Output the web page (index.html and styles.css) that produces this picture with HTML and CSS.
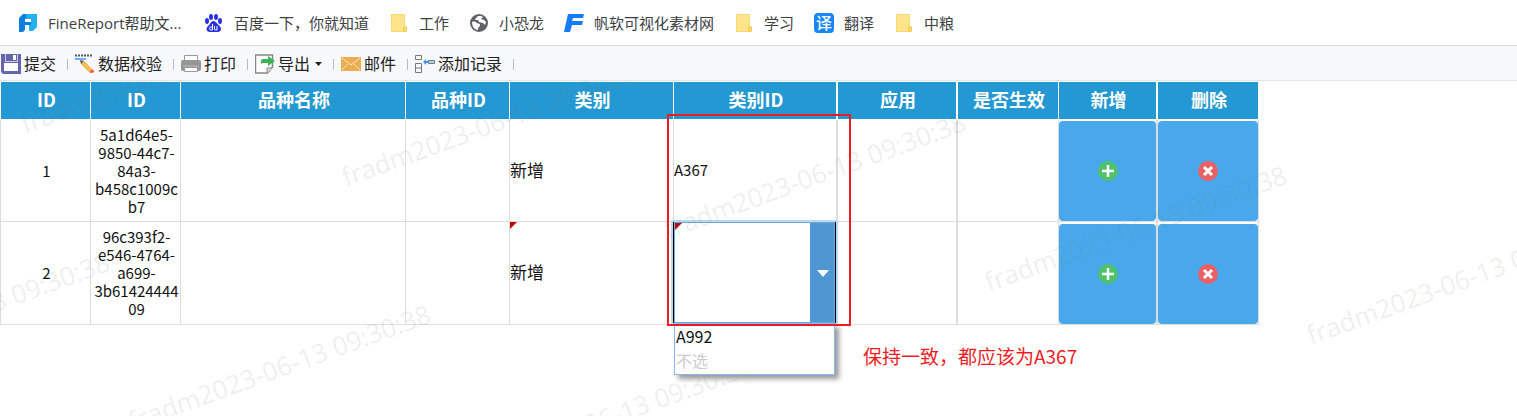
FILE: index.html
```
<!DOCTYPE html>
<html lang="zh-CN">
<head>
<meta charset="UTF-8">
<meta name="viewport" content="width=device-width, initial-scale=1.0">
<title>填报</title>
<link rel="stylesheet" href="styles.css">
</head>
<body>

<!-- 书签栏 -->
<nav class="bookmarks">
    <a href="#" class="first">
        <svg class="icon" viewBox="0 0 20 20"><path d="M5 1h14v13l-4 4h-4V9H5z" fill="#22b2ef"/><path d="M1 5l4-4h3v5h4v5H7v6l-2 2H1z" fill="#0a7fdb"/><path d="M7 6h6v3H7zM7 12h4v6H7z" fill="#fff"/><path d="M7 9h6v3H7z" fill="#0a7fdb"/></svg>
        <span>FineReport帮助文...</span>
    </a>
    <a href="#">
        <svg class="icon" viewBox="0 0 20 20" fill="#2932e1"><ellipse cx="7" cy="4" rx="2" ry="3"/><ellipse cx="12" cy="4" rx="2" ry="3"/><ellipse cx="3" cy="8" rx="2" ry="3"/><ellipse cx="16" cy="8" rx="2" ry="3"/><path d="M9.500 8c2 0 3 2 4.500 3.500s3 2.500 3 4.500-1.500 3-3.500 3H6c-2 0-3.500-1-3.500-3s2-3 3-4.500S7.500 8 9.500 8z"/><g fill="none" stroke="#fff"><path d="M8.500 11v6H7q-1.500 0-1.500-1.500T7 14h1.500M10.500 13v3q0 1 1 1H13v-4"/></g></svg>
        <span>百度一下，你就知道</span>
    </a>
    <a href="#">
        <svg class="icon" viewBox="0 0 20 20"><path d="M2 2q0-1 1-1h12q1 0 1 1v11q2 0 2 2v3q0 1-1 1H3q-1 0-1-1z" fill="#ffe48c"/><path d="M2.500 1.500h13v12q-1 .5-1 2v3h-12z" fill="none" stroke="#fbd971"/><path d="M14.500 17v-2q0-1.500 1.500-1.500t1.500 1.500v2q0 1.500-1.500 1.500t-1.500-1.500z" fill="#ffdf75" stroke="#f2c94c"/></svg>
        <span>工作</span>
    </a>
    <a href="#">
        <svg class="icon" viewBox="0 0 20 20"><circle cx="10" cy="10" r="9" fill="#5f6368"/><path d="M3 9c2-1 4 0 5 1s3 0 3 2-2 2-2 4v1c-4 0-6-4-6-8z" fill="#fff"/><path d="M9 3h3l2 1-2 2 3 1 2 2-1 3-2-2-4-1-1-2-3 0 1-2z" fill="#fff"/></svg>
        <span>小恐龙</span>
    </a>
    <a href="#">
        <svg class="icon" viewBox="0 0 20 20"><path d="M4 1h16l-1 4H9l-1 3h11l-1 4H8l-2 7H0z" fill="#167cff"/></svg>
        <span>帆软可视化素材网</span>
    </a>
    <a href="#">
        <svg class="icon" viewBox="0 0 20 20"><path d="M2 2q0-1 1-1h12q1 0 1 1v11q2 0 2 2v3q0 1-1 1H3q-1 0-1-1z" fill="#ffe48c"/><path d="M2.500 1.500h13v12q-1 .5-1 2v3h-12z" fill="none" stroke="#fbd971"/><path d="M14.500 17v-2q0-1.500 1.500-1.500t1.500 1.500v2q0 1.500-1.500 1.500t-1.500-1.500z" fill="#ffdf75" stroke="#f2c94c"/></svg>
        <span>学习</span>
    </a>
    <a href="#">
        <span class="icon fanyi">译</span>
        <span>翻译</span>
    </a>
    <a href="#">
        <svg class="icon" viewBox="0 0 20 20"><path d="M2 2q0-1 1-1h12q1 0 1 1v11q2 0 2 2v3q0 1-1 1H3q-1 0-1-1z" fill="#ffe48c"/><path d="M2.500 1.500h13v12q-1 .5-1 2v3h-12z" fill="none" stroke="#fbd971"/><path d="M14.500 17v-2q0-1.500 1.500-1.500t1.500 1.500v2q0 1.500-1.500 1.500t-1.500-1.500z" fill="#ffdf75" stroke="#f2c94c"/></svg>
        <span>中粮</span>
    </a>
</nav>

<!-- 工具栏 -->
<div class="toolbar">
    <button type="button">
        <svg class="icon" viewBox="0 0 20 20"><path d="M0 0h20v20H2l-2-2z" fill="#6467ad"/><path d="M4 0h1v7h11V0h1v8H4z" fill="#c9cae6"/><path d="M12 1h3v5h-3z" fill="#fff"/><path d="M3 9h14v8H3z" fill="#fff"/></svg>
        <span>提交</span>
    </button>
    <button type="button">
        <svg class="icon" viewBox="0 0 20 20"><path d="M0 1.500h18" stroke="#555" stroke-width="2" stroke-dasharray="2 1"/><path d="M0 5h11" stroke="#3d94f6" stroke-width="1.500"/><path d="M5 6l4 1 8 8-3 3-8-8z" fill="#f5b041"/><path d="M5 6l4 1-3 3z" fill="#666"/><path d="M14 18l3-3 1 1q2 1 1 2t-3 1z" fill="#f0604d"/><path d="M8 9l7 7" stroke="#ffd98c"/></svg>
        <span>数据校验</span>
    </button>
    <button type="button">
        <svg class="icon" viewBox="0 0 20 20"><path d="M3.500 1.500h13v6h-13z" fill="#fff" stroke="#999"/><rect y="6" width="20" height="11" rx="2" fill="#969696"/><path d="M2 12h16" stroke="#bbb"/><path d="M3.500 13.500h13v4h-13z" fill="#fff" stroke="#999"/></svg>
        <span>打印</span>
    </button>
    <button type="button">
        <svg class="icon" viewBox="0 0 20 20"><path d="M.5 1h17v12l-5 6H.5z" fill="#fff" stroke="#888" stroke-width="1.500"/><path d="M12 19v-5h5" fill="#ddd" stroke="#888"/><path d="M6 10V7q0-2 2-2h5V2l7 5-7 5V9H8q-1 0-2 1z" fill="#3fb457"/></svg>
        <span>导出</span>
        <svg class="caret" viewBox="0 0 7 4"><path d="M0 0h7L3.500 4z" fill="#222"/></svg>
    </button>
    <button type="button">
        <svg class="icon" viewBox="0 0 20 20"><path d="M0 3h20v14H0z" fill="#ebac52"/><path d="M1 4l9 7 9-7M1 16l6-6M19 16l-6-6" fill="none" stroke="#fbe6c4"/></svg>
        <span>邮件</span>
    </button>
    <button type="button">
        <svg class="icon" viewBox="0 0 20 20" fill="none" stroke="#777"><path d="M.5 1.500h6v4h-6zM.5 9.500h6v9h-6zM.5 14h6"/><path d="M13.500 6.500h6v3h-6z" fill="#a9d4ff"/><path d="M8 8l3-3v2h2v2h-2v2z" fill="#3d94f6" stroke="none"/></svg>
        <span>添加记录</span>
    </button>
</div>

<!-- 报表 -->
<main class="report">
    <table>
        <colgroup>
            <col class="w-no"><col class="w-id"><col class="w-name"><col class="w-nameid"><col class="w-type">
            <col class="w-type"><col class="w-app"><col class="w-flag"><col class="w-add"><col class="w-del">
        </colgroup>
        <thead>
            <tr>
                <th>ID</th><th>ID</th><th>品种名称</th><th>品种ID</th><th>类别</th>
                <th class="thick">类别ID</th><th class="thick">应用</th><th>是否生效</th><th class="thick">新增</th><th>删除</th>
            </tr>
        </thead>
        <tbody>
            <tr>
                <td>1</td>
                <td>5a1d64e5-<br>9850-44c7-<br>84a3-<br>b458c1009c<br>b7</td>
                <td></td>
                <td></td>
                <td class="left">新增</td>
                <td class="left thick code">A367</td>
                <td class="thick"></td>
                <td></td>
                <td class="action thick"><button type="button" aria-label="新增"><svg viewBox="0 0 20 20"><circle cx="10" cy="10" r="10" fill="#50c26c"/><path d="M10 4v12M4 10h12" stroke="#fff" stroke-width="2.500"/></svg></button></td>
                <td class="action"><button type="button" aria-label="删除"><svg viewBox="0 0 20 20"><circle cx="10" cy="10" r="10" fill="#e96065"/><path d="M6 6l8 8M14 6l-8 8" stroke="#fff" stroke-width="3"/></svg></button></td>
            </tr>
            <tr>
                <td>2</td>
                <td>96c393f2-<br>e546-4764-<br>a699-<br>3b61424444<br>09</td>
                <td></td>
                <td></td>
                <td class="left edited">新增</td>
                <td class="left thick editing">
                    <div class="combo">
                        <select aria-label="类别ID">
                            <option selected></option>
                            <option>A992</option>
                        </select>
                        <svg class="arrow" viewBox="0 0 12 7"><path d="M0 0h12L6 7z" fill="#fff"/></svg>
                    </div>
                    <ul class="menu">
                        <li>A992</li>
                        <li class="none">不选</li>
                    </ul>
                </td>
                <td class="thick"></td>
                <td></td>
                <td class="action thick"><button type="button" aria-label="新增"><svg viewBox="0 0 20 20"><circle cx="10" cy="10" r="10" fill="#50c26c"/><path d="M10 4v12M4 10h12" stroke="#fff" stroke-width="2.500"/></svg></button></td>
                <td class="action"><button type="button" aria-label="删除"><svg viewBox="0 0 20 20"><circle cx="10" cy="10" r="10" fill="#e96065"/><path d="M6 6l8 8M14 6l-8 8" stroke="#fff" stroke-width="3"/></svg></button></td>
            </tr>
        </tbody>
    </table>

    <!-- 水印 -->
    <svg class="watermark" aria-hidden="true">
        <text transform="translate(25 53) rotate(-20)">fradm2023-06-13 09:30:38</text>
        <text transform="translate(346 106) rotate(-20)">fradm2023-06-13 09:30:38</text>
        <text transform="translate(668 158) rotate(-20)">fradm2023-06-13 09:30:38</text>
        <text transform="translate(989 211) rotate(-20)">fradm2023-06-13 09:30:38</text>
        <text transform="translate(1311 264) rotate(-20)">fradm2023-06-13 09:30:38</text>
        <text transform="translate(-188 298) rotate(-20)">fradm2023-06-13 09:30:38</text>
        <text transform="translate(133 350) rotate(-20)">fradm2023-06-13 09:30:38</text>
        <text transform="translate(455 402) rotate(-20)">fradm2023-06-13 09:30:38</text>
    </svg>

    <!-- 标注 -->
    <div class="mark"></div>
    <p class="note">保持一致，都应该为A367</p>
</main>

</body>
</html>
```
FILE: styles.css
```
* {
    box-sizing: border-box;
}

body {
    display: flex;
    flex-direction: column;
    min-height: 100vh;
    margin: 0;
    background: #fff;
    color: #222;
    font-family: "Open Sans", "Noto Sans CJK SC", sans-serif;
}

button {
    padding: 0;
    border: none;
    background: none;
    color: inherit;
    font: inherit;
    cursor: pointer;
}

.icon {
    flex: none;
    width: 20px;
    height: 20px;
}

/* 书签栏 */
.bookmarks {
    display: flex;
    align-items: center;
    gap: 20px;
    height: 46px;
    padding-left: 18px;
    border-bottom: 1px solid #dcdcdc;
    font-size: 15px;
    line-height: 20px;
    white-space: nowrap;
}

.bookmarks a {
    display: flex;
    align-items: center;
    gap: 10px;
    color: #3c4043;
    text-decoration: none;
}

.bookmarks .first {
    min-width: 166px;
}

.bookmarks .fanyi {
    border-radius: 4px;
    background: #1687f7;
    color: #fff;
    font-size: 16px;
    font-weight: 500;
    text-align: center;
}

/* 工具栏 */
.toolbar {
    display: flex;
    align-items: center;
    height: 35px;
    padding: 2px 0 0 1px;
    border-bottom: 1px solid #e4e5ea;
    background: #f7f8fa;
    font-size: 16px;
    line-height: 20px;
    white-space: nowrap;
}

.toolbar button {
    display: flex;
    align-items: center;
    gap: 3px;
}

/* 按钮之间的分隔线 */
.toolbar button::after {
    content: "";
    width: 1px;
    height: 11px;
    margin: 0 7px 0 8px;
    background: #bbb;
}

.toolbar .caret {
    width: 7px;
    height: 4px;
    margin-left: 2px;
}

/* 报表 */
.report {
    position: relative;
    flex: 1;
    overflow: hidden;
}

table {
    width: 1259px;
    table-layout: fixed;
    border-collapse: separate;
    border-spacing: 0;
    font-family: "Noto Sans CJK SC", sans-serif;
}

.w-no { width: 91px; }
.w-id { width: 90px; }
.w-name { width: 225px; }
.w-nameid { width: 104px; }
.w-type { width: 164px; }
.w-app { width: 120px; }
.w-flag { width: 101px; }
.w-add { width: 99px; }
.w-del { width: 101px; }

th {
    height: 39px;
    padding: 0 0 4px 2px;
    border: 1px solid #fff;
    border-left: none;
    background: #2498d2;
    color: #fff;
    font-size: 18px;
    line-height: 20px;
}

td {
    height: 103px;
    padding: 0 0 0 2px;
    border: solid #ddd;
    border-width: 0 1px 1px 0;
    color: #111;
    font-size: 15px;
    line-height: 18px;
    text-align: center;
}

th:first-child,
td:first-child {
    border-left-width: 1px;
    border-left-style: solid;
}

tbody tr:first-child td {
    height: 102px;
}

th.thick,
td.thick {
    border-right-width: 2px;
}

td.left {
    padding: 0 0 2px;
    font-size: 17px;
    text-align: left;
}

td.code {
    font-size: 15px;
}

.edited {
    position: relative;
}

/* 已修改标记 */
.edited::before,
.combo::before {
    content: "";
    position: absolute;
    top: 0;
    left: 0;
    border-top: 7px solid #c00000;
    border-right: 7px solid transparent;
}

.combo::before {
    top: 1px;
    left: 1px;
}

td.action {
    padding: 0;
    vertical-align: bottom;
}

.action button {
    display: flex;
    align-items: center;
    justify-content: center;
    width: 100%;
    height: 100px;
    border-radius: 4px;
    background: #48a8eb;
}

.action svg {
    width: 20px;
    height: 20px;
}

/* 下拉框 */
.editing {
    position: relative;
}

.combo {
    position: absolute;
    inset: 0 0 1px -1px;
    border: solid #000;
    border-width: 0 1px;
    box-shadow: 0 0 0 2px #b8daf0;
}

.combo select {
    display: block;
    width: 100%;
    height: 100%;
    padding: 0 26px 0 3px;
    appearance: none;
    border: 1px solid #6fa8dc;
    border-radius: 0;
    background: linear-gradient(#4f97d2, #4f97d2) right / 24px 100% no-repeat #fff;
    font: inherit;
}

.combo .arrow {
    position: absolute;
    top: 48px;
    right: 6px;
    width: 12px;
    height: 7px;
    pointer-events: none;
}

.menu {
    position: absolute;
    top: 101px;
    left: 0;
    right: 1px;
    z-index: 2;
    margin: 0;
    padding: 0 1px 2px;
    border: 1px solid #8ab8f0;
    background: #fff;
    box-shadow: 4px 4px 5px #999;
    font-size: 16px;
    line-height: 24px;
    list-style: none;
}

.menu .none {
    color: #ccc;
}

/* 水印 */
.watermark {
    position: absolute;
    inset: 0;
    width: 100%;
    height: 100%;
    fill: rgba(120, 120, 120, 0.13);
    font-size: 26px;
    pointer-events: none;
}

/* 标注 */
.mark {
    position: absolute;
    top: 33px;
    left: 667px;
    z-index: 3;
    width: 184px;
    height: 212px;
    border: 2px solid #ed1c24;
    pointer-events: none;
}

.note {
    position: absolute;
    top: 263px;
    left: 863px;
    margin: 0;
    color: #ed1c24;
    font-family: "Noto Sans CJK SC", sans-serif;
    font-size: 19px;
    line-height: 24px;
}
```
